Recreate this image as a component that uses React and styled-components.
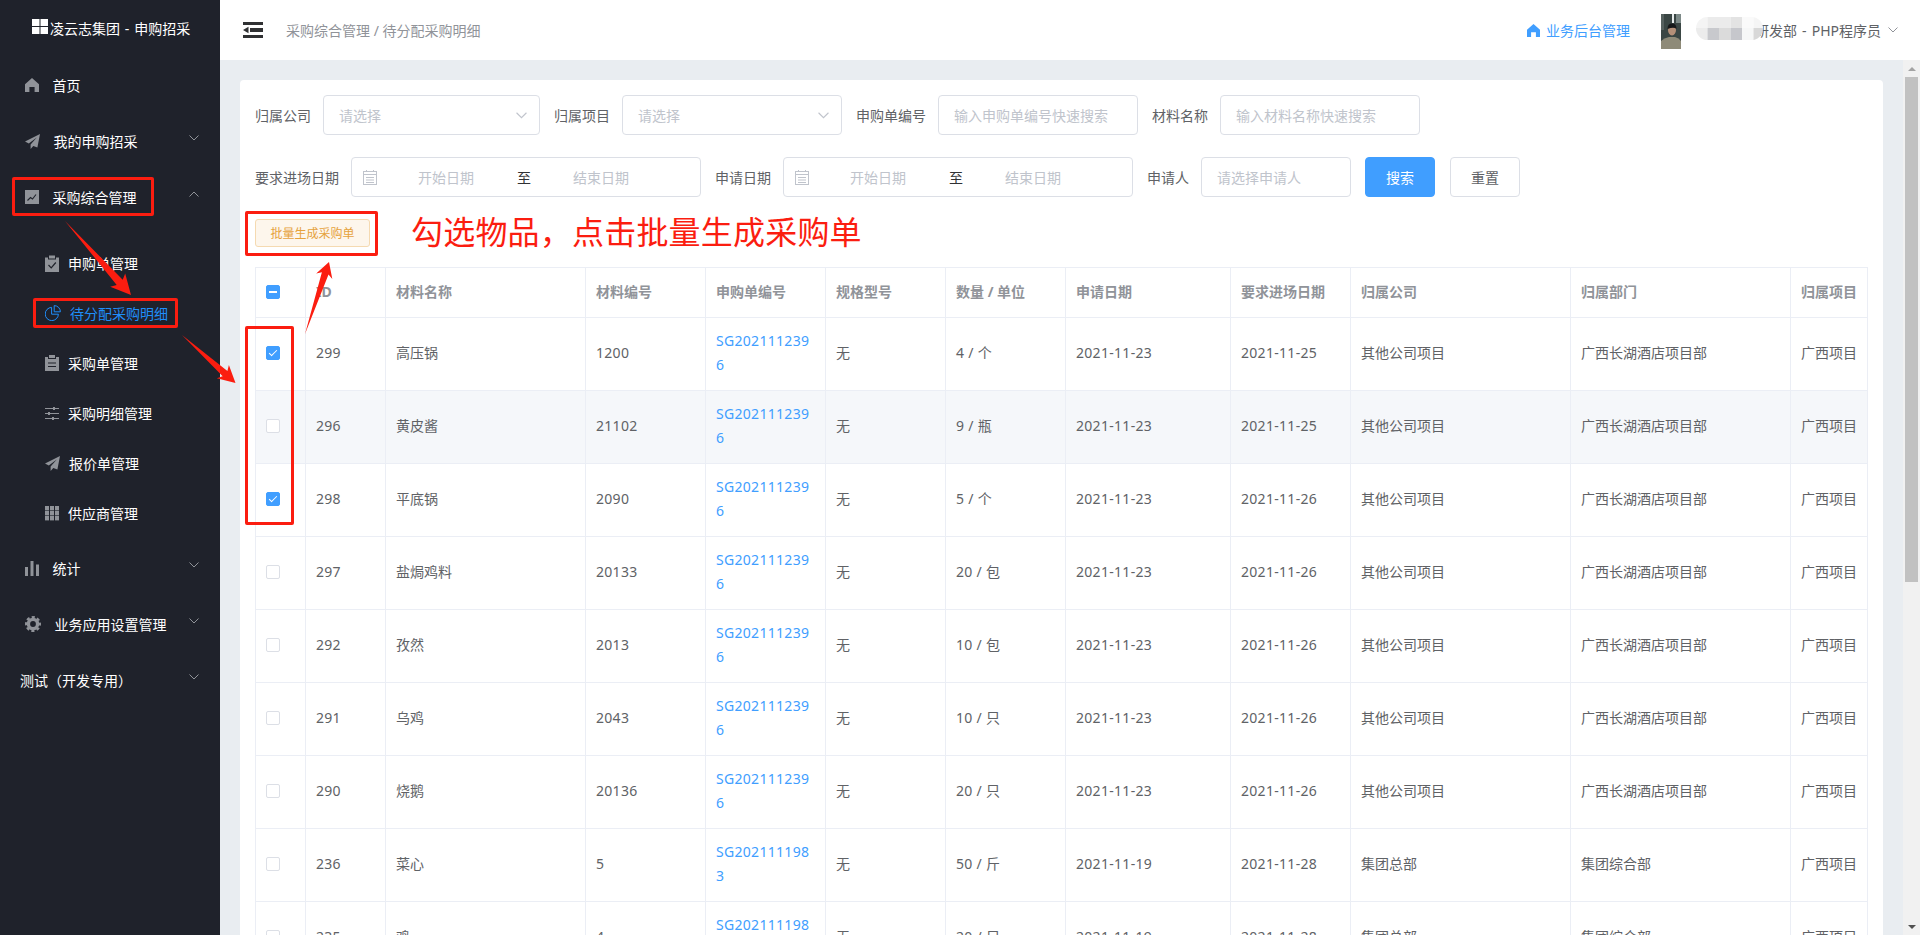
import React from "react";
import styled, { createGlobalStyle } from "styled-components";

const Global = createGlobalStyle`
  html, body { margin: 0; padding: 0; height: 100%; overflow: hidden; }
  body { font-family: "Noto Sans", "Noto Sans CJK SC", sans-serif; font-size: 14px; color: #606266; }
  * { box-sizing: border-box; }
`;

const Page = styled.div`
  position: relative;
  display: flex;
  width: 100%;
  height: 100vh;
  overflow: hidden;
`;

/* ---------- sidebar ---------- */
const Sidebar = styled.aside`
  flex: 0 0 220px;
  background: #1f222b;
  color: #fff;
`;
const Brand = styled.div`
  height: 57px;
  padding-left: 32px;
  display: flex;
  align-items: center;
  gap: 2px;
  line-height: 20px;
  word-spacing: 1.2px;
`;
const BrandMark = styled.svg`
  width: 16px;
  height: 15px;
  margin-bottom: 5px;
  flex: none;
`;
const MenuItem = styled.div`
  height: 56px;
  display: flex;
  align-items: center;
  padding: 0 21px 0 ${(p) => (p.$bare ? 20 : 25)}px;
`;
const SubList = styled.div`
  padding: 13px 0 2px;
`;
const SubItem = styled.div`
  height: 50px;
  display: flex;
  align-items: center;
  padding-left: 45px;
  color: ${(p) => (p.$active ? "#1f8efa" : "#fff")};
`;
const MenuIcon = styled.span`
  flex: 0 0 14px;
  display: flex;
  justify-content: center;
  margin-right: ${(p) => (p.$sub ? 9 : 13.5)}px;
  color: ${(p) => (p.$active ? "#1f8efa" : "#909399")};
  svg { flex: none; display: block; }
`;
const MenuArrow = styled.svg`
  margin-left: auto;
  margin-bottom: 6px;
  width: 10px;
  height: 6px;
  color: #909399;
  flex: none;
`;

/* ---------- right side ---------- */
const Column = styled.div`
  flex: 1;
  min-width: 0;
  display: flex;
  flex-direction: column;
`;
const Header = styled.header`
  flex: 0 0 60px;
  background: #fff;
  display: flex;
  align-items: center;
  padding: 0 22px 0 23px;
`;
const Hamburger = styled.svg`
  width: 20px;
  height: 16px;
  margin-right: 23px;
  flex: none;
`;
const Crumb = styled.div`
  color: #909399;
`;
const HeaderRight = styled.div`
  margin-left: auto;
  display: flex;
  align-items: center;
`;
const BackLink = styled.div`
  display: flex;
  align-items: center;
  gap: 6px;
  color: #409eff;
`;
const Avatar = styled.svg`
  width: 20px;
  height: 35px;
  margin: 3px 15px 0 31px;
  flex: none;
`;
const User = styled.div`
  position: relative;
  padding-left: 59px;
  display: flex;
  align-items: center;
  gap: 7px;
  word-spacing: 1.5px;
`;
const Mosaic = styled.svg`
  position: absolute;
  left: 0;
  top: -3px;
  width: 67px;
  height: 23px;
`;
const UserArrow = styled.svg`
  width: 10px;
  height: 6px;
  color: #909399;
  flex: none;
`;

const Body = styled.div`
  flex: 1;
  min-height: 0;
  display: flex;
`;
const Main = styled.main`
  flex: 1;
  min-width: 0;
  background: #e9edf1;
  overflow: hidden;
  padding: 20px;
`;
const ScrollTrack = styled.div`
  flex: 0 0 17px;
  background: #f1f1f1;
  display: flex;
  flex-direction: column;
  align-items: center;
`;
const ScrollUp = styled.div`
  flex: 0 0 17px;
  width: 8px;
  display: flex;
  align-items: center;
  &::before {
    content: "";
    border-left: 4px solid transparent;
    border-right: 4px solid transparent;
    border-bottom: 4px solid #a3a3a3;
  }
`;
const ScrollThumb = styled.div`
  flex: 0 0 505px;
  width: 13px;
  background: #c1c1c1;
`;
const ScrollDown = styled.div`
  margin-top: auto;
  flex: 0 0 17px;
  width: 8px;
  display: flex;
  align-items: center;
  &::before {
    content: "";
    border-left: 4px solid transparent;
    border-right: 4px solid transparent;
    border-top: 4px solid #505050;
  }
`;
const Card = styled.section`
  background: #fff;
  border-radius: 4px;
  padding: 15px;
`;
const FormRow = styled.div`
  display: flex;
  align-items: center;
  height: 40px;
  margin-bottom: 22px;
`;
const Label = styled.label`
  margin-right: 12px;
  padding-bottom: 1px;
  white-space: nowrap;
  color: #606266;
`;
const Field = styled.div`
  width: ${(p) => p.$w}px;
  height: 40px;
  margin-right: 14px;
  border: 1px solid #dcdfe6;
  border-radius: 4px;
  background: #fff;
  display: flex;
  align-items: center;
  padding: 0 12px 0 15px;
  flex: none;
`;
const Placeholder = styled.span`
  padding-bottom: 1px;
  color: #c0c4cc;
  white-space: nowrap;
`;
const SelectArrow = styled.svg`
  margin-left: auto;
  width: 11px;
  height: 7px;
  color: #c0c4cc;
  flex: none;
`;
const DateField = styled.div`
  width: 350px;
  height: 40px;
  margin-right: 14px;
  border: 1px solid #dcdfe6;
  border-radius: 4px;
  background: #fff;
  display: grid;
  grid-template-columns: 14px 138px 18px 136px;
  align-items: center;
  justify-items: center;
  padding-left: 11px;
  flex: none;
`;
const Sep = styled.span`
  padding-bottom: 1px;
  color: #303133;
`;
const Btn = styled.button`
  width: 70px;
  height: 40px;
  margin-right: 15px;
  border-radius: 4px;
  font: inherit;
  flex: none;
  border: 1px solid ${(p) => (p.$primary ? "#409eff" : "#dcdfe6")};
  background: ${(p) => (p.$primary ? "#409eff" : "#fff")};
  color: ${(p) => (p.$primary ? "#fff" : "#606266")};
`;
const BatchBtn = styled.button`
  display: block;
  width: 115px;
  height: 28px;
  margin-bottom: 20px;
  border: 1px solid #f5dab1;
  border-radius: 3px;
  background: #fdf6ec;
  color: #e6a23c;
  font: inherit;
  font-size: 12px;
  padding: 0;
`;

/* ---------- table ---------- */
const TableWrap = styled.div`
  border: 1px solid #ebeef5;
  border-bottom: 0;
  overflow: hidden;
`;
const Table = styled.table`
  table-layout: fixed;
  width: 1612px;
  border-collapse: separate;
  border-spacing: 0;
`;
const Th = styled.th`
  padding: 12px 10px 13px;
  line-height: 24px;
  text-align: left;
  font-weight: 700;
  color: #909399;
  white-space: nowrap;
  border-right: 1px solid #ebeef5;
  border-bottom: 1px solid #ebeef5;
`;
const Td = styled.td`
  padding: 11px 10px 13px;
  line-height: 24px;
  color: #606266;
  vertical-align: middle;
  letter-spacing: ${(p) => (p.$num ? "0.3px" : "0")};
  white-space: ${(p) => (p.$wrap ? "normal" : "nowrap")};
  border-right: 1px solid #ebeef5;
  border-bottom: 1px solid #ebeef5;
`;
const Tr = styled.tr`
  background: ${(p) => (p.$hover ? "#f5f7fa" : "#fff")};
`;
const OrderLink = styled.a`
  display: block;
  width: 96px;
  color: #409eff;
  letter-spacing: 0.3px;
  word-break: break-all;
`;
const Check = styled.span`
  position: relative;
  display: block;
  width: 14px;
  height: 14px;
  border-radius: 2px;
  border: 1px solid ${(p) => (p.$on || p.$mixed ? "#409eff" : "#dcdfe6")};
  background: ${(p) => (p.$on || p.$mixed ? "#409eff" : "#fff")};
  margin-left: 0;
  &::after {
    content: "";
    display: ${(p) => (p.$on || p.$mixed ? "block" : "none")};
    position: absolute;
    ${(p) =>
      p.$mixed
        ? "left: 2px; right: 2px; top: 5px; height: 2px; background: #fff;"
        : "left: 4px; top: 1px; width: 3px; height: 7px; border: 1px solid #fff; border-left: 0; border-top: 0; transform: rotate(45deg);"}
  }
`;

/* ---------- red annotations on top of the page ---------- */
const RedBox = styled.div`
  position: absolute;
  left: ${(p) => p.$x}px;
  top: ${(p) => p.$y}px;
  width: ${(p) => p.$w}px;
  height: ${(p) => p.$h}px;
  border: 3px solid #fb1d10;
  border-radius: 2px;
  pointer-events: none;
`;
const RedNote = styled.div`
  position: absolute;
  left: 411px;
  top: 209px;
  font-size: 32px;
  line-height: 46px;
  letter-spacing: 0.2px;
  color: #fb1d10;
  white-space: nowrap;
`;
const ArrowLayer = styled.svg`
  position: absolute;
  left: 0;
  top: 0;
  width: 1920px;
  height: 935px;
  pointer-events: none;
`;

const Chevron = ({ up }) => (
  <polyline
    points={up ? "0.5,5.5 5,1 9.5,5.5" : "0.5,0.5 5,5 9.5,0.5"}
    fill="none"
    stroke="currentColor"
    strokeWidth="1"
  />
);

const Home = ({ size = 14 }) => (
  <svg width={size} height={size} viewBox="0 0 14 14" fill="currentColor">
    <path d="M7 0 L14 6.3 V14 H9.6 V9 H4.4 V14 H0 V6.3 Z" />
  </svg>
);
const Plane = () => (
  <svg width="15" height="15" viewBox="0 0 15 15" fill="currentColor">
    <path d="M15 0 L0 7.5 L3.8 9.6 L11.8 3.4 L5.6 10.6 V15 L8.3 12 L12.4 13.6 Z" />
  </svg>
);
const ChartIcon = () => (
  <svg width="14" height="14" viewBox="0 0 14 14">
    <rect width="14" height="14" fill="currentColor" />
    <path d="M2.5 10.5 L5.5 7.5 L7.5 9 L11 4.5" fill="none" stroke="#1f222b" strokeWidth="1.1" />
  </svg>
);
const ClaimIcon = () => (
  <svg width="14" height="17" viewBox="0 0 14 17" fill="currentColor">
    <path d="M0 2.5 H3 V4.5 H11 V2.5 H14 V17 H0 Z" />
    <rect x="4" y="0.5" width="6" height="3" />
    <path d="M3.5 10 L6.2 12.8 L10.8 7.5" fill="none" stroke="#1f222b" strokeWidth="1.2" />
  </svg>
);
const PieIcon = () => (
  <svg width="16" height="16" viewBox="0 0 16 16" fill="none" stroke="currentColor" strokeWidth="1">
    <path d="M6.6 2.4 A6.6 6.6 0 1 0 13.4 9.2 H6.6 Z" />
    <path d="M9.2 0.6 A6.2 6.2 0 0 1 15.4 6.8 H9.2 Z" />
  </svg>
);
const OrderIcon = () => (
  <svg width="14" height="16" viewBox="0 0 14 16" fill="currentColor">
    <path d="M0 2 H3 V4 H11 V2 H14 V16 H0 Z" />
    <rect x="4" y="0" width="6" height="3" />
    <path d="M3 8 H11 M3 11.5 H11" stroke="#1f222b" strokeWidth="1.1" />
  </svg>
);
const SlidersIcon = () => (
  <svg width="14" height="13" viewBox="0 0 14 13" fill="currentColor">
    <rect y="1" width="14" height="1" />
    <rect y="6" width="14" height="1" />
    <rect y="11" width="14" height="1" />
    <rect x="8" y="0" width="2" height="3" />
    <rect x="3" y="5" width="2" height="3" />
    <rect x="7" y="10" width="2" height="3" />
  </svg>
);
const GridIcon = () => (
  <svg width="14" height="15" viewBox="0 0 14 15" fill="currentColor">
    {[0, 5, 10].map((y) =>
      [0, 5, 10].map((x) => <rect key={`${x}-${y}`} x={x} y={y} width="4" height="4.4" />)
    )}
  </svg>
);
const BarsIcon = () => (
  <svg width="14" height="15" viewBox="0 0 14 15" fill="currentColor">
    <rect x="0" y="6" width="3" height="9" />
    <rect x="5.5" y="0" width="3" height="15" />
    <rect x="11" y="3.5" width="3" height="11.5" />
  </svg>
);
const GearIcon = () => (
  <svg width="16" height="16" viewBox="0 0 16 16" fill="none" stroke="currentColor">
    <circle cx="8" cy="8" r="4.6" strokeWidth="3.4" />
    <circle cx="8" cy="8" r="6.8" strokeWidth="2.4" strokeDasharray="3.1 2.24" strokeDashoffset="1.5" />
  </svg>
);
const Calendar = () => (
  <svg width="14" height="15" viewBox="0 0 14 15" fill="none" stroke="#c0c4cc" strokeWidth="1">
    <rect x="0.5" y="1.5" width="13" height="13" />
    <path d="M0.5 4.5 H13.5 M3 7.5 H11 M3 10 H11 M3 12.5 H11 M3.5 0 V2 M10.5 0 V2" />
  </svg>
);

function arrowPoints(x1, y1, x2, y2, head, barb, neck) {
  const len = Math.hypot(x2 - x1, y2 - y1);
  const ux = (x2 - x1) / len;
  const uy = (y2 - y1) / len;
  const nx = -uy;
  const ny = ux;
  const bx = x2 - ux * head;
  const by = y2 - uy * head;
  const kx = x2 - ux * (head - 3);
  const ky = y2 - uy * (head - 3);
  return [
    [x1, y1],
    [kx + nx * neck, ky + ny * neck],
    [bx + nx * barb, by + ny * barb],
    [x2, y2],
    [bx - nx * barb, by - ny * barb],
    [kx - nx * neck, ky - ny * neck],
  ]
    .map((p) => p.map((v) => v.toFixed(1)).join(","))
    .join(" ");
}

const COLS = [50, 80, 200, 120, 120, 120, 120, 165, 120, 220, 220, 77];
const HEADS = ["ID", "材料名称", "材料编号", "申购单编号", "规格型号", "数量 / 单位", "申请日期", "要求进场日期", "归属公司", "归属部门", "归属项目"];
const GX = ["其他公司项目", "广西长湖酒店项目部"];
const ZB = ["集团总部", "集团综合部"];
const ROWS = [
  { id: 299, name: "高压锅", code: "1200", no: "SG2021112396", qty: "4 / 个", a: "2021-11-23", b: "2021-11-25", org: GX, on: true },
  { id: 296, name: "黄皮酱", code: "21102", no: "SG2021112396", qty: "9 / 瓶", a: "2021-11-23", b: "2021-11-25", org: GX, hover: true },
  { id: 298, name: "平底锅", code: "2090", no: "SG2021112396", qty: "5 / 个", a: "2021-11-23", b: "2021-11-26", org: GX, on: true },
  { id: 297, name: "盐焗鸡料", code: "20133", no: "SG2021112396", qty: "20 / 包", a: "2021-11-23", b: "2021-11-26", org: GX },
  { id: 292, name: "孜然", code: "2013", no: "SG2021112396", qty: "10 / 包", a: "2021-11-23", b: "2021-11-26", org: GX },
  { id: 291, name: "乌鸡", code: "2043", no: "SG2021112396", qty: "10 / 只", a: "2021-11-23", b: "2021-11-26", org: GX },
  { id: 290, name: "烧鹅", code: "20136", no: "SG2021112396", qty: "20 / 只", a: "2021-11-23", b: "2021-11-26", org: GX },
  { id: 236, name: "菜心", code: "5", no: "SG2021111983", qty: "50 / 斤", a: "2021-11-19", b: "2021-11-28", org: ZB },
  { id: 235, name: "鸡", code: "4", no: "SG2021111983", qty: "20 / 只", a: "2021-11-19", b: "2021-11-28", org: ZB },
];

const Select = ({ w, text }) => (
  <Field $w={w}>
    <Placeholder>{text}</Placeholder>
    <SelectArrow viewBox="0 0 10 6"><Chevron /></SelectArrow>
  </Field>
);
const Input = ({ w, text }) => (
  <Field $w={w}>
    <Placeholder>{text}</Placeholder>
  </Field>
);
const DateRange = () => (
  <DateField>
    <Calendar />
    <Placeholder>开始日期</Placeholder>
    <Sep>至</Sep>
    <Placeholder>结束日期</Placeholder>
  </DateField>
);

const Top = ({ icon, label, up, bare }) => (
  <MenuItem $bare={bare}>
    {icon && <MenuIcon>{icon}</MenuIcon>}
    <span>{label}</span>
    {up !== undefined && (
      <MenuArrow viewBox="0 0 10 6"><Chevron up={up} /></MenuArrow>
    )}
  </MenuItem>
);
const Sub = ({ icon, label, active }) => (
  <SubItem $active={active}>
    <MenuIcon $sub $active={active}>{icon}</MenuIcon>
    <span>{label}</span>
  </SubItem>
);

export default function App() {
  return (
    <Page>
      <Global />
      <Sidebar>
        <Brand>
          <BrandMark viewBox="0 0 16 15" fill="#fff">
            <rect width="7.5" height="7" />
            <rect x="8.5" width="7.5" height="7" />
            <rect y="8" width="7.5" height="7" />
            <rect x="8.5" y="8" width="7.5" height="7" />
          </BrandMark>
          <span>凌云志集团 - 申购招采</span>
        </Brand>
        <Top icon={<Home />} label="首页" />
        <Top icon={<Plane />} label="我的申购招采" up={false} />
        <Top icon={<ChartIcon />} label="采购综合管理" up={true} />
        <SubList>
          <Sub icon={<ClaimIcon />} label="申购单管理" />
          <Sub icon={<PieIcon />} label="待分配采购明细" active />
          <Sub icon={<OrderIcon />} label="采购单管理" />
          <Sub icon={<SlidersIcon />} label="采购明细管理" />
          <Sub icon={<Plane />} label="报价单管理" />
          <Sub icon={<GridIcon />} label="供应商管理" />
        </SubList>
        <Top icon={<BarsIcon />} label="统计" up={false} />
        <Top icon={<GearIcon />} label="业务应用设置管理" up={false} />
        <Top label="测试（开发专用）" up={false} bare />
      </Sidebar>

      <Column>
        <Header>
          <Hamburger viewBox="0 0 20 16" fill="#303133">
            <rect width="20" height="3" />
            <rect x="7" y="6" width="13" height="4" />
            <rect y="13" width="20" height="3" />
            <path d="M0 8 L5.5 4.8 V11.2 Z" />
          </Hamburger>
          <Crumb>采购综合管理 / 待分配采购明细</Crumb>
          <HeaderRight>
            <BackLink>
              <Home size={13} />
              <span>业务后台管理</span>
            </BackLink>
            <Avatar viewBox="0 0 20 35">
              <rect width="20" height="35" fill="#3a4644" />
              <rect x="11" width="2" height="9" fill="#e8ecec" />
              <rect x="15" width="5" height="9" fill="#7d8a88" />
              <rect y="0" width="3" height="16" fill="#55605e" />
              <path d="M0 35 V27 Q3 24 8 23 H14 Q18 24 20 27 V35 Z" fill="#8e8a78" />
              <ellipse cx="11" cy="16" rx="4" ry="5.4" fill="#b48f78" />
              <path d="M6.5 15 Q6.5 9.6 11 9.6 Q15.5 9.6 15.5 15 Q13 12.6 6.5 15 Z" fill="#16181a" />
            </Avatar>
            <User>
              <Mosaic viewBox="0 0 67 23">
                <defs>
                  <clipPath id="mosaicPill">
                    <rect width="67" height="23" rx="11.5" />
                  </clipPath>
                </defs>
                <g clipPath="url(#mosaicPill)">
                  {["#f4f4f4", "#ebebeb", "#ebebeb", "#e3e3e3", "#fafafa", "#f5f5f5"].map((c, i) => (
                    <rect key={c + i} x={i * 11.5} y="0" width="11.5" height="11" fill={c} />
                  ))}
                  {["#ececec", "#c8c9cd", "#dbdbdb", "#c6c7cc", "#f6f7f7", "#d8d8d8"].map((c, i) => (
                    <rect key={c + i} x={i * 11.5} y="11" width="11.5" height="12" fill={c} />
                  ))}
                </g>
              </Mosaic>
              <span>研发部 - PHP程序员</span>
              <UserArrow viewBox="0 0 10 6"><Chevron /></UserArrow>
            </User>
          </HeaderRight>
        </Header>

        <Body>
          <Main>
            <Card>
              <FormRow>
                <Label>归属公司</Label>
                <Select w={217} text="请选择" />
                <Label>归属项目</Label>
                <Select w={220} text="请选择" />
                <Label>申购单编号</Label>
                <Input w={200} text="输入申购单编号快速搜索" />
                <Label>材料名称</Label>
                <Input w={200} text="输入材料名称快速搜索" />
              </FormRow>
              <FormRow>
                <Label>要求进场日期</Label>
                <DateRange />
                <Label>申请日期</Label>
                <DateRange />
                <Label>申请人</Label>
                <Input w={150} text="请选择申请人" />
                <Btn $primary>搜索</Btn>
                <Btn>重置</Btn>
              </FormRow>
              <BatchBtn>批量生成采购单</BatchBtn>
              <TableWrap>
                <Table>
                  <colgroup>
                    {COLS.map((w, i) => (
                      <col key={i} width={w} />
                    ))}
                  </colgroup>
                  <thead>
                    <Tr>
                      <Th><Check $mixed /></Th>
                      {HEADS.map((h) => (
                        <Th key={h}>{h}</Th>
                      ))}
                    </Tr>
                  </thead>
                  <tbody>
                    {ROWS.map((r) => (
                      <Tr key={r.id} $hover={r.hover}>
                        <Td><Check $on={r.on} /></Td>
                        <Td $num>{r.id}</Td>
                        <Td>{r.name}</Td>
                        <Td $num>{r.code}</Td>
                        <Td $wrap><OrderLink>{r.no}</OrderLink></Td>
                        <Td>无</Td>
                        <Td $num>{r.qty}</Td>
                        <Td $num>{r.a}</Td>
                        <Td $num>{r.b}</Td>
                        <Td>{r.org[0]}</Td>
                        <Td>{r.org[1]}</Td>
                        <Td>广西项目</Td>
                      </Tr>
                    ))}
                  </tbody>
                </Table>
              </TableWrap>
            </Card>
          </Main>
          <ScrollTrack>
            <ScrollUp />
            <ScrollThumb />
            <ScrollDown />
          </ScrollTrack>
        </Body>
      </Column>

      <RedBox $x={12} $y={177} $w={142} $h={39} />
      <RedBox $x={33} $y={298} $w={145} $h={30} />
      <RedBox $x={245} $y={211} $w={133} $h={45} />
      <RedBox $x={245} $y={326} $w={49} $h={199} />
      <RedNote>勾选物品，点击批量生成采购单</RedNote>
      <ArrowLayer viewBox="0 0 1920 935" fill="#fb1d10">
        <polygon points={arrowPoints(65, 221, 131, 295, 20, 10, 4)} />
        <polygon points={arrowPoints(182, 335, 235.5, 383, 17, 9, 3.5)} />
        <polygon points={arrowPoints(305, 334, 329, 262, 15, 8.5, 3.5)} />
      </ArrowLayer>
    </Page>
  );
}
